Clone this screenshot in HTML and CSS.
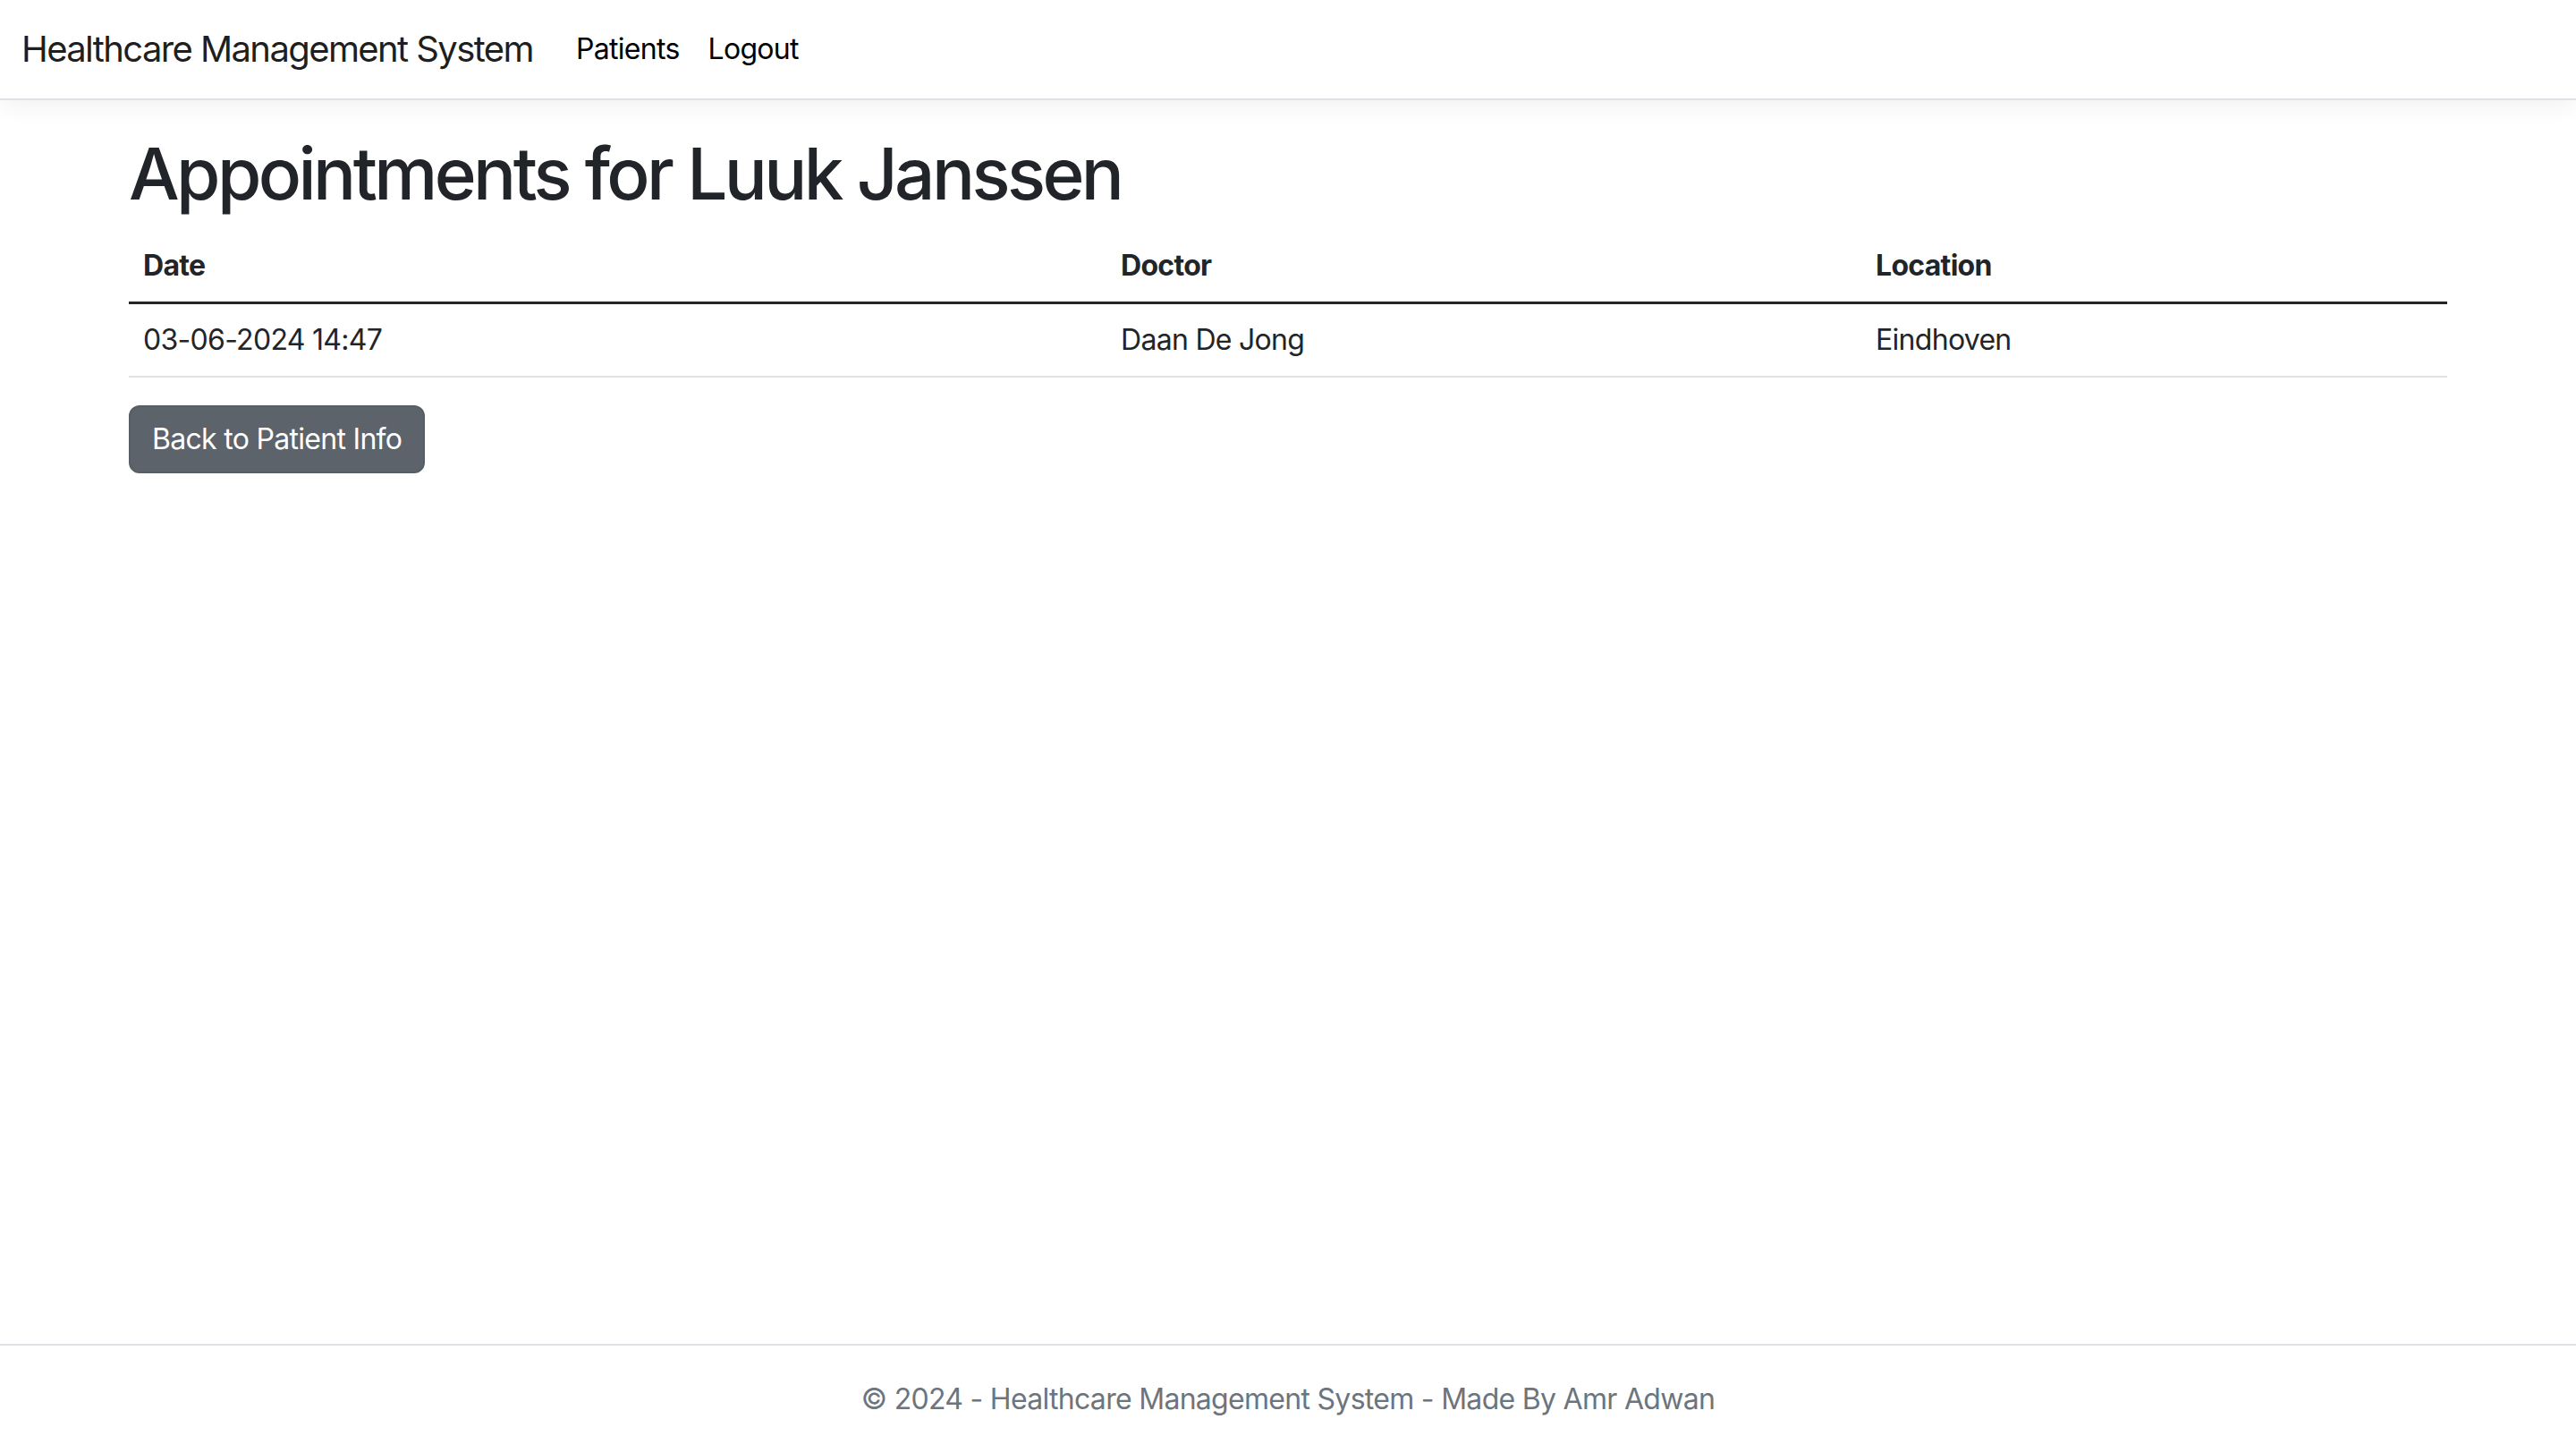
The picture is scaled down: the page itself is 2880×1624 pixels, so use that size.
FILE: index.html
```html
<!DOCTYPE html>
<html lang="en">
<head>
<meta charset="utf-8">
<title>Appointments - Healthcare Management System</title>
<link rel="stylesheet" href="styles.css">
</head>
<body>
<header>
  <nav class="navbar">
    <a class="brand" href="#">Healthcare Management System</a>
    <ul class="nav">
      <li><a class="nav-link" href="#">Patients</a></li>
      <li><a class="nav-link" href="#">Logout</a></li>
    </ul>
  </nav>
</header>
<div class="container">
  <main class="main">
    <h1 class="title">Appointments for Luuk Janssen</h1>
    <table class="table">
      <colgroup>
        <col class="col-date">
        <col class="col-doctor">
        <col class="col-location">
      </colgroup>
      <thead>
        <tr><th>Date</th><th>Doctor</th><th>Location</th></tr>
      </thead>
      <tbody>
        <tr><td>03-06-2024 14:47</td><td>Daan De Jong</td><td>Eindhoven</td></tr>
      </tbody>
    </table>
    <a class="btn" href="#">Back to Patient Info</a>
  </main>
</div>
<footer class="footer">
  <div class="footer-inner">© 2024 - Healthcare Management System - Made By Amr Adwan</div>
</footer>
</body>
</html>
```
FILE: styles.css
```css
* { box-sizing: border-box; }
html, body { height: 100%; }
body {
  margin: 0;
  font-family: Inter, "Liberation Sans", sans-serif;
  font-size: 32px;
  line-height: 1.5;
  letter-spacing: -0.022em;
  color: #212529;
  background: #fff;
  display: flex;
  flex-direction: column;
  min-height: 100vh;
}
a { text-decoration: none; color: inherit; }

.navbar {
  display: flex;
  align-items: center;
  height: 112px;
  padding: 0 24px;
  border-bottom: 2px solid #dee2e6;
  box-shadow: 0 8px 24px rgba(0,0,0,.05);
  margin-bottom: 32px;
  background: #fff;
}
.brand {
  font-size: 40px;
  line-height: 60px;
  letter-spacing: -0.04em;
  margin-right: 32px;
  color: rgba(0,0,0,.9);
}
.nav {
  display: flex;
  list-style: none;
  margin: 0;
  padding: 0;
}
.nav-link {
  display: block;
  padding: 16px;
  color: #000;
  font-size: 32px;
  line-height: 48px;
}

.container {
  width: 2640px;
  max-width: 100%;
  margin: 0 auto;
  padding: 0 24px;
  flex: 1 0 auto;
}
.main { padding-bottom: 32px; }

.title {
  font-size: 80px;
  font-weight: 500;
  line-height: 1.2;
  letter-spacing: -0.045em;
  padding-top: 2px;
  margin: 0 0 15px;
}

.table {
  width: 100%;
  border-collapse: collapse;
  table-layout: fixed;
  margin-bottom: 31px;
}
.col-date { width: 1093px; }
.col-doctor { width: 844px; }
.col-location { width: 655px; }
.table th, .table td {
  padding: 16px;
  text-align: left;
  vertical-align: top;
  border-bottom: 2px solid #dee2e6;
}
.table th { font-weight: 700; }
.table thead th { border-bottom: 3px solid #212529; }

.btn {
  display: inline-block;
  padding: 12px 24px;
  font-size: 32px;
  line-height: 48px;
  color: #fff;
  background: #5c636a;
  border: 2px solid #565e64;
  border-radius: 12px;
}

.footer {
  border-top: 2px solid #dee2e6;
  color: #6c757d;
  line-height: 120px;
  white-space: nowrap;
}
.footer-inner { text-align: center; }
```
